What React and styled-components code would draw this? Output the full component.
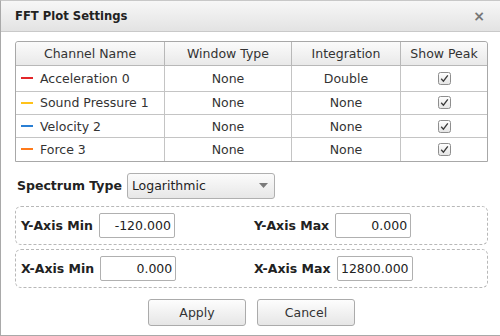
import React from "react";
import styled, { createGlobalStyle } from "styled-components";

const Global = createGlobalStyle`
  html, body { margin: 0; padding: 0; background: #fff; }
  body { font-family: "DejaVu Sans", Verdana, sans-serif; color: #333; }
  * { box-sizing: border-box; }
`;

const Dialog = styled.div`
  width: 500px;
  height: 336px;
  background: #fff;
  border-left: 1px solid #a9a9a9;
  border-top: 1px solid #c8c8c8;
  border-bottom: 1px solid #a9a9a9;
  display: flex;
  flex-direction: column;
`;

const TitleBar = styled.div`
  height: 31px;
  flex: none;
  display: flex;
  align-items: center;
  justify-content: space-between;
  padding: 0 15px 0 14px;
  background: linear-gradient(#f7f7f7, #e3e3e3);
  border-bottom: 1px solid #c9c9c9;
`;

const Title = styled.span`
  font-size: 11.6px;
  font-weight: bold;
  color: #222;
`;

const Close = styled.span`
  font-size: 14px;
  font-weight: bold;
  color: #777;
  line-height: 1;
`;

const Body = styled.div`
  padding: 9px 12px 0 14px;
  display: flex;
  flex-direction: column;
`;

const Table = styled.table`
  border-collapse: separate;
  border-spacing: 0;
  width: 473px;
  border: 1px solid #a8a8a8;
  border-radius: 3px 3px 0 0;
  font-size: 12.5px;
  table-layout: fixed;
`;

const Th = styled.th`
  font-weight: normal;
  height: 24px;
  padding: 0;
  background: linear-gradient(#fbfbfb, #e9e9e9);
  border-bottom: 1px solid #b8b8b8;
  border-left: ${(p) => (p.$first ? "none" : "1px solid #b8b8b8")};
  color: #333;
  text-align: center;
  &:first-child { border-top-left-radius: 3px; }
  &:last-child { border-top-right-radius: 3px; }
`;

const Td = styled.td`
  height: ${(p) => (p.$tall ? 24.7 : 23.3)}px;
  padding: 0;
  border-top: ${(p) => (p.$firstRow ? "none" : "1px solid #c4c4c4")};
  border-left: ${(p) => (p.$first ? "none" : "1px solid #c4c4c4")};
  text-align: ${(p) => (p.$left ? "left" : "center")};
  color: #333;
  vertical-align: middle;
`;

const ChannelCell = styled.div`
  display: flex;
  align-items: center;
  padding-left: 5px;
  gap: 7px;
`;

const Swatch = styled.span`
  width: 12px;
  height: 2px;
  background: ${(p) => p.$color};
  flex: none;
`;

const SpectrumRow = styled.div`
  display: flex;
  align-items: center;
  margin-top: 11px;
  padding-left: 2px;
  gap: 5px;
`;

const BoldLabel = styled.span`
  font-size: 12.5px;
  font-weight: bold;
  color: #222;
  white-space: nowrap;
`;

const Select = styled.div`
  width: 148px;
  height: 26px;
  border: 1px solid #b0b0b0;
  border-radius: 3px;
  background: linear-gradient(#fbfbfb, #e7e7e7);
  display: flex;
  align-items: center;
  justify-content: space-between;
  padding: 0 6px 0 4px;
  font-size: 12.5px;
  color: #222;
`;

const Group = styled.div`
  margin-top: ${(p) => p.$mt}px;
  width: 473px;
  height: 39px;
  border: 1px dashed #b8b8b8;
  border-radius: 6px;
  display: grid;
  grid-template-columns: 233px 1fr;
  align-items: center;
  padding-left: 5px;
`;

const Field = styled.div`
  display: flex;
  align-items: center;
  gap: 6px;
`;

const Input = styled.div`
  width: 76px;
  height: 25px;
  border: 1px solid #b0b0b0;
  border-radius: 2px;
  background: #fff;
  display: flex;
  align-items: center;
  justify-content: flex-end;
  padding-right: 3px;
  font-size: 12.5px;
  color: #222;
`;

const Buttons = styled.div`
  display: flex;
  justify-content: center;
  gap: 11px;
  margin-top: 11px;
`;

const Button = styled.button`
  width: 98px;
  height: 27px;
  border: 1px solid #ababab;
  border-radius: 3px;
  background: linear-gradient(#fdfdfd, #e6e6e6);
  font-family: "DejaVu Sans", Verdana, sans-serif;
  font-size: 12.5px;
  color: #333;
  padding: 0;
`;

const Check = () => (
  <svg width="13" height="13" viewBox="0 0 13 13" style={{ display: "block", margin: "0 auto" }}>
    <defs>
      <linearGradient id="cbg" x1="0" y1="0" x2="0" y2="1">
        <stop offset="0" stopColor="#ffffff" />
        <stop offset="1" stopColor="#e4e4e4" />
      </linearGradient>
    </defs>
    <rect x="0.5" y="0.5" width="12" height="12" rx="2" fill="url(#cbg)" stroke="#8e8e8e" />
    <path d="M3.2 6.8 L5.4 9.2 L9.8 3.4" fill="none" stroke="#3a3a3a" strokeWidth="1.3" />
  </svg>
);

const Arrow = () => (
  <svg width="9" height="5" viewBox="0 0 9 5">
    <path d="M0 0 H9 L4.5 5 Z" fill="#7a7a7a" />
  </svg>
);

const rows = [
  { name: "Acceleration 0", color: "#e3262a", win: "None", integ: "Double" },
  { name: "Sound Pressure 1", color: "#ffc21a", win: "None", integ: "None" },
  { name: "Velocity 2", color: "#2a7fd4", win: "None", integ: "None" },
  { name: "Force 3", color: "#ff7a1a", win: "None", integ: "None" },
];

export default function App() {
  return (
    <>
      <Global />
      <Dialog>
        <TitleBar>
          <Title>FFT Plot Settings</Title>
          <Close>×</Close>
        </TitleBar>
        <Body>
          <Table>
            <colgroup>
              <col style={{ width: 148 }} />
              <col style={{ width: 127 }} />
              <col style={{ width: 109 }} />
              <col />
            </colgroup>
            <thead>
              <tr>
                <Th $first>Channel Name</Th>
                <Th>Window Type</Th>
                <Th>Integration</Th>
                <Th>Show Peak</Th>
              </tr>
            </thead>
            <tbody>
              {rows.map((r, i) => (
                <tr key={r.name}>
                  <Td $first $left $firstRow={i === 0} $tall={i === 0}>
                    <ChannelCell>
                      <Swatch $color={r.color} />
                      {r.name}
                    </ChannelCell>
                  </Td>
                  <Td $firstRow={i === 0} $tall={i === 0}>{r.win}</Td>
                  <Td $firstRow={i === 0} $tall={i === 0}>{r.integ}</Td>
                  <Td $firstRow={i === 0} $tall={i === 0}><Check /></Td>
                </tr>
              ))}
            </tbody>
          </Table>
          <SpectrumRow>
            <BoldLabel>Spectrum Type</BoldLabel>
            <Select>
              <span>Logarithmic</span>
              <Arrow />
            </Select>
          </SpectrumRow>
          <Group $mt={7}>
            <Field>
              <BoldLabel>Y-Axis Min</BoldLabel>
              <Input>-120.000</Input>
            </Field>
            <Field>
              <BoldLabel>Y-Axis Max</BoldLabel>
              <Input>0.000</Input>
            </Field>
          </Group>
          <Group $mt={4}>
            <Field>
              <BoldLabel>X-Axis Min</BoldLabel>
              <Input>0.000</Input>
            </Field>
            <Field>
              <BoldLabel>X-Axis Max</BoldLabel>
              <Input>12800.000</Input>
            </Field>
          </Group>
          <Buttons>
            <Button>Apply</Button>
            <Button>Cancel</Button>
          </Buttons>
        </Body>
      </Dialog>
    </>
  );
}
